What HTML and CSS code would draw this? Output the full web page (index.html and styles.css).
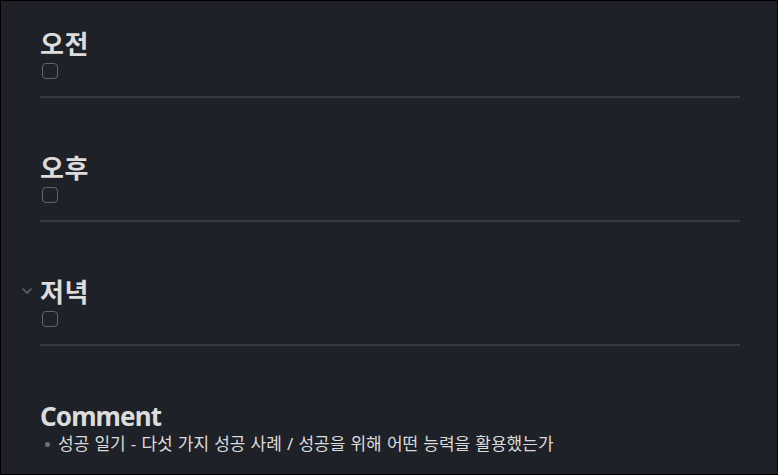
FILE: index.html
```html
<!DOCTYPE html>
<html lang="ko">
<head>
<meta charset="utf-8">
<link rel="stylesheet" href="styles.css">
</head>
<body>
<div class="page">
  <section class="section">
    <h2 class="heading">오전</h2>
    <div class="task"><span class="checkbox"></span></div>
    <hr class="divider">
  </section>
  <section class="section">
    <h2 class="heading">오후</h2>
    <div class="task"><span class="checkbox"></span></div>
    <hr class="divider">
  </section>
  <section class="section">
    <h2 class="heading">
      <svg class="fold" width="10" height="6" viewBox="0 0 10 6"><path d="M1 1 L5 5 L9 1" fill="none" stroke="#646c76" stroke-width="1.4" stroke-linecap="round" stroke-linejoin="round"/></svg>
      저녁
    </h2>
    <div class="task"><span class="checkbox"></span></div>
    <hr class="divider">
  </section>
  <section class="section">
    <h2 class="heading heading-latin">Comment</h2>
    <ul class="bullets">
      <li class="bullet">성공 일기 - 다섯 가지 성공 사례 / 성공을 위해 어떤 능력을 활용했는가</li>
    </ul>
  </section>
</div>
</body>
</html>
```

FILE: styles.css
```css
html, body {
  margin: 0;
  padding: 0;
  background: #1e2128;
}
.page {
  box-sizing: border-box;
  width: 778px;
  height: 475px;
  border: 1px solid #000;
  background: #1e2128;
  padding: 27px 37px 0 39px;
  font-family: "Noto Sans", "Noto Sans CJK KR", sans-serif;
  color: #dadada;
  overflow: hidden;
}
.section {
  margin-bottom: 54px;
}
.heading {
  position: relative;
  margin: 0;
  font-size: 26px;
  line-height: 32px;
  font-weight: 700;
  color: #dcdcdc;
  letter-spacing: 0.5px;
}
.heading-latin {
  letter-spacing: -0.9px;
}
.fold {
  position: absolute;
  left: -18px;
  top: 12px;
}
.task {
  margin-top: 3px;
  height: 16px;
  display: flex;
  padding-left: 2px;
}
.checkbox {
  box-sizing: border-box;
  width: 16px;
  height: 16px;
  border: 1px solid #5c6670;
  border-radius: 4px;
}
.divider {
  margin: 17px 0 0 0;
  border: none;
  height: 2px;
  background: #363a3d;
}
.bullets {
  list-style: none;
  margin: 0;
  padding: 0;
}
.bullet {
  position: relative;
  padding-left: 18px;
  font-size: 17px;
  line-height: 24px;
  word-spacing: 0.7px;
  color: #dcdcdc;
}
.bullet::before {
  content: "";
  position: absolute;
  left: 5px;
  top: 10px;
  width: 5px;
  height: 5px;
  border-radius: 50%;
  background: #6b737d;
}
```
